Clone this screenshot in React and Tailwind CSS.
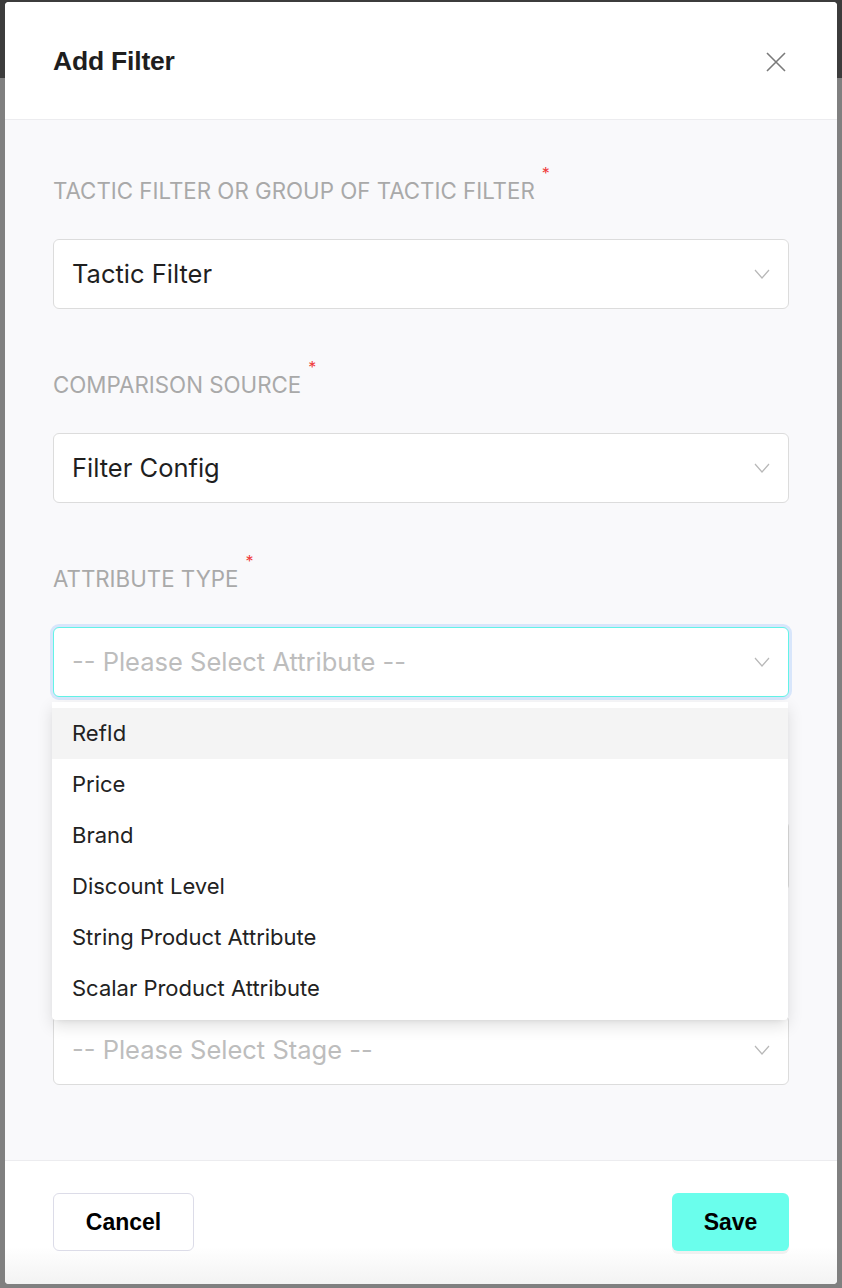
import React from "react";

const Chevron = () => (
  <svg width="16" height="10" viewBox="0 0 16 10" fill="none" className="shrink-0 ml-[2px]">
    <path d="M1 1 L8 9 L15 1" stroke="#b8b8b8" strokeWidth="1.2" />
  </svg>
);

function Field({ label, value, placeholder, focused, children }) {
  return (
    <div className="relative mb-[62px]">
      <div className="h-[28px] flex items-center text-[22.3px] leading-[28px] text-[#a9a9a9] uppercase">
        {label && (
          <>
            <span>{label}</span>
            <span className="self-start -mt-[12px] ml-[7px] text-[16px] leading-[16px] text-[#f03c3c]">*</span>
          </>
        )}
      </div>
      <div
        className={
          "mt-[34px] h-[70px] flex items-center justify-between rounded-[6px] bg-white pl-[18px] pr-[18px] border " +
          (focused
            ? "border-[#62f3e7] shadow-[0_0_0_3px_#d8e6fb]"
            : "border-[#dcdcdc]")
        }
      >
        <span className={"text-[25.5px] " + (value ? "text-[#1f1f1f]" : "text-[#bdbdbd]")}>
          {value || placeholder}
        </span>
        <Chevron />
      </div>
      {children}
    </div>
  );
}

export default function App() {
  const items = [
    "RefId",
    "Price",
    "Brand",
    "Discount Level",
    "String Product Attribute",
    "Scalar Product Attribute",
  ];
  return (
    <div
      className="w-[842px] h-[1288px] overflow-hidden pt-[2px] pl-[5px] bg-[linear-gradient(#3c3c3c_0_78px,#808080_78px)]"
      style={{ fontFamily: "Inter, 'Liberation Sans', sans-serif" }}
    >
      <div className="w-[832px] h-[1282px] flex flex-col bg-white rounded-[4px] overflow-hidden">
        {/* Header */}
        <div className="h-[118px] shrink-0 flex items-center justify-between px-[48px] pt-[2px] border-b border-[#ececef] bg-white">
          <h2
            className="text-[26.5px] font-bold text-[#1e1e1e] tracking-[-0.2px]"
            style={{ fontFamily: "'Liberation Sans', Arial, sans-serif" }}
          >
            Add Filter
          </h2>
          <svg width="22" height="22" viewBox="0 0 22 22" fill="none" className="mr-[2px]">
            <path d="M2 2 L20 20 M20 2 L2 20" stroke="#7a7a7a" strokeWidth="1.6" />
          </svg>
        </div>

        {/* Body */}
        <div className="flex-1 bg-[#f9f9fb] px-[48px] pt-[57px]">
          <Field label="Tactic Filter or Group of Tactic Filter" value="Tactic Filter" />
          <Field label="Comparison Source" value="Filter Config" />
          <Field label="Attribute Type" placeholder="-- Please Select Attribute --" focused>
            <div className="absolute left-[-1px] top-[137px] w-[736px] z-10 bg-white rounded-b-[4px] py-[6px] shadow-[0_6px_16px_rgba(0,0,0,0.12),0_3px_6px_-4px_rgba(0,0,0,0.12)]">
              {items.map((it, i) => (
                <div
                  key={it}
                  className={
                    "h-[51px] flex items-center px-[20px] text-[22px] text-[#222] " +
                    (i === 0 ? "bg-[#f4f4f4]" : "")
                  }
                >
                  {it}
                </div>
              ))}
            </div>
          </Field>
          <Field label="" placeholder="" />
          <Field label="" placeholder="-- Please Select Stage --" />
        </div>

        {/* Footer */}
        <div className="h-[124px] shrink-0 flex items-start justify-between px-[48px] pt-[32px] border-t border-[#ececef] bg-gradient-to-b from-white from-70% to-[#f3f3f3]">
          <button
            className="w-[141px] h-[58px] rounded-[6px] border border-[#dcdce8] bg-white text-[23px] font-bold text-black"
            style={{ fontFamily: "'Liberation Sans', Arial, sans-serif" }}
          >
            Cancel
          </button>
          <button
            className="w-[117px] h-[58px] rounded-[6px] bg-[#6afeec] text-[23px] font-bold text-black shadow-[0_3px_0_rgba(0,0,0,0.05)]"
            style={{ fontFamily: "'Liberation Sans', Arial, sans-serif" }}
          >
            Save
          </button>
        </div>
      </div>
    </div>
  );
}
